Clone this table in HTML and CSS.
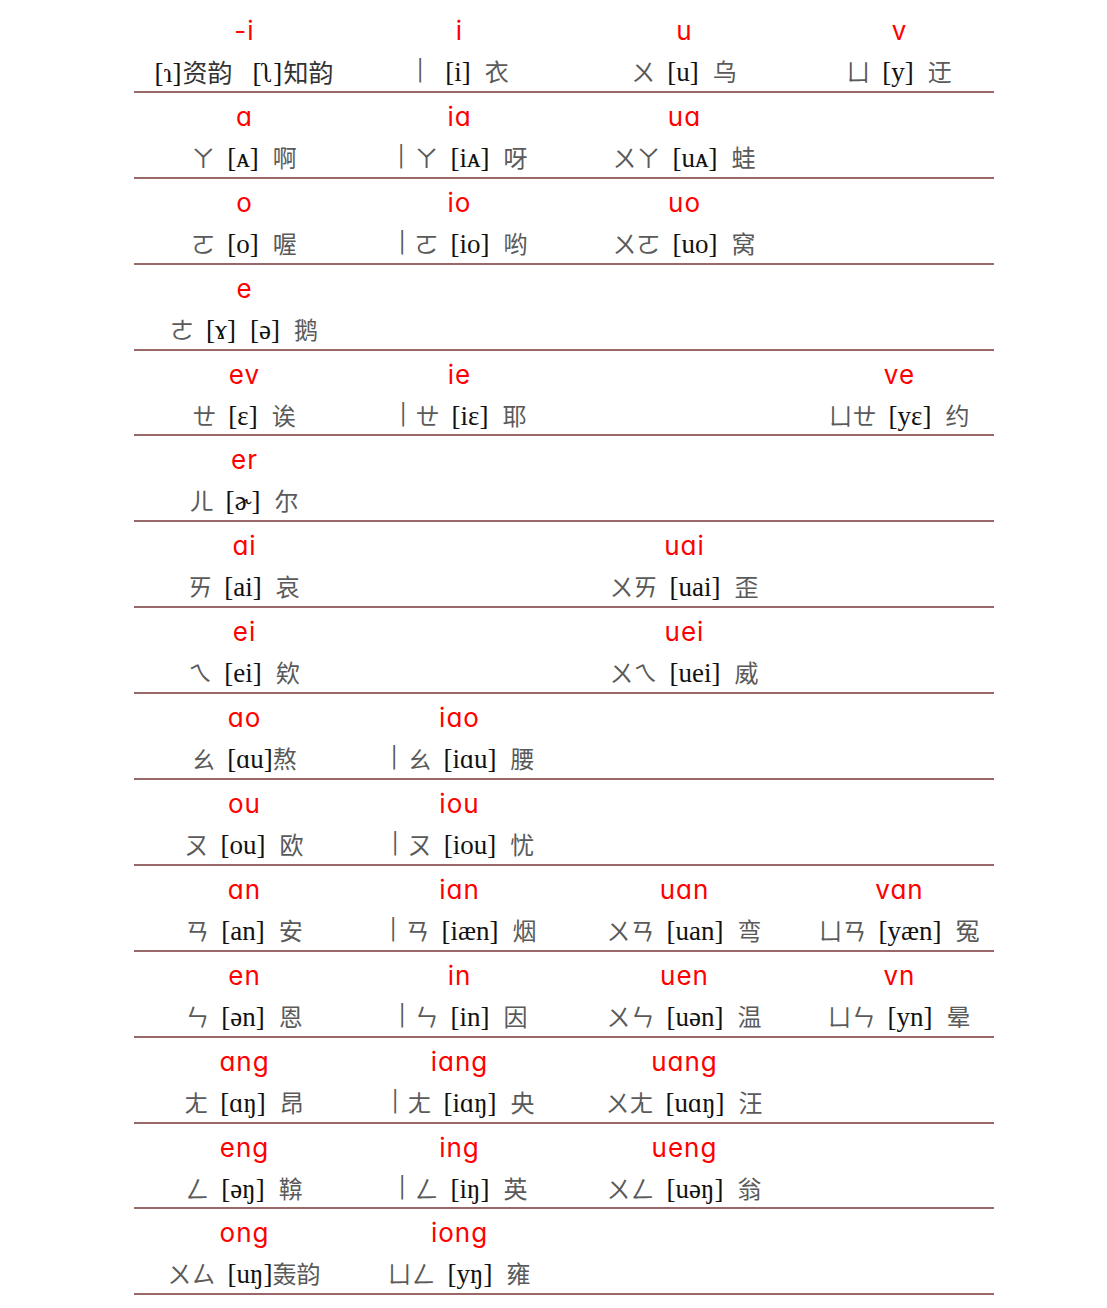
FILE: index.html
```html
<!DOCTYPE html>
<html lang="zh">
<head>
<meta charset="utf-8">
<title>韵母表</title>
<link rel="stylesheet" href="styles.css">
</head>
<body>
<div class="table">
  <div class="row">
    <div class="cell"><div class="py">-i</div><div class="zh"><span class="ipa tight">[ɿ]</span><span class="hz dark gap">资韵</span><span class="ipa tight">[ʅ]</span><span class="hz dark">知韵</span></div></div>
    <div class="cell"><div class="py">i</div><div class="zh"><span class="bp"><span class="yi">ㄧ</span></span><span class="ipa">[i]</span><span class="hz">衣</span></div></div>
    <div class="cell"><div class="py">u</div><div class="zh"><span class="bp">ㄨ</span><span class="ipa">[u]</span><span class="hz">乌</span></div></div>
    <div class="cell"><div class="py">v</div><div class="zh"><span class="bp">ㄩ</span><span class="ipa">[y]</span><span class="hz">迂</span></div></div>
  </div>
  <div class="row">
    <div class="cell"><div class="py">a</div><div class="zh"><span class="bp">ㄚ</span><span class="ipa">[ᴀ]</span><span class="hz">啊</span></div></div>
    <div class="cell"><div class="py">ia</div><div class="zh"><span class="bp"><span class="yi">ㄧ</span>ㄚ</span><span class="ipa">[iᴀ]</span><span class="hz">呀</span></div></div>
    <div class="cell"><div class="py">ua</div><div class="zh"><span class="bp">ㄨㄚ</span><span class="ipa">[uᴀ]</span><span class="hz">蛙</span></div></div>
    <div class="cell"></div>
  </div>
  <div class="row">
    <div class="cell"><div class="py">o</div><div class="zh"><span class="bp">ㄛ</span><span class="ipa">[o]</span><span class="hz">喔</span></div></div>
    <div class="cell"><div class="py">io</div><div class="zh"><span class="bp"><span class="yi">ㄧ</span>ㄛ</span><span class="ipa">[io]</span><span class="hz">哟</span></div></div>
    <div class="cell"><div class="py">uo</div><div class="zh"><span class="bp">ㄨㄛ</span><span class="ipa">[uo]</span><span class="hz">窝</span></div></div>
    <div class="cell"></div>
  </div>
  <div class="row">
    <div class="cell"><div class="py">e</div><div class="zh"><span class="bp">ㄜ</span><span class="ipa">[ɤ]</span><span class="ipa">[ə]</span><span class="hz">鹅</span></div></div>
    <div class="cell"></div>
    <div class="cell"></div>
    <div class="cell"></div>
  </div>
  <div class="row">
    <div class="cell"><div class="py">ev</div><div class="zh"><span class="bp">ㄝ</span><span class="ipa">[ɛ]</span><span class="hz">诶</span></div></div>
    <div class="cell"><div class="py">ie</div><div class="zh"><span class="bp"><span class="yi">ㄧ</span>ㄝ</span><span class="ipa">[iɛ]</span><span class="hz">耶</span></div></div>
    <div class="cell"></div>
    <div class="cell"><div class="py">ve</div><div class="zh"><span class="bp">ㄩㄝ</span><span class="ipa">[yɛ]</span><span class="hz">约</span></div></div>
  </div>
  <div class="row">
    <div class="cell"><div class="py">er</div><div class="zh"><span class="bp">ㄦ</span><span class="ipa">[ɚ]</span><span class="hz">尔</span></div></div>
    <div class="cell"></div>
    <div class="cell"></div>
    <div class="cell"></div>
  </div>
  <div class="row">
    <div class="cell"><div class="py">ai</div><div class="zh"><span class="bp">ㄞ</span><span class="ipa">[ai]</span><span class="hz">哀</span></div></div>
    <div class="cell"></div>
    <div class="cell"><div class="py">uai</div><div class="zh"><span class="bp">ㄨㄞ</span><span class="ipa">[uai]</span><span class="hz">歪</span></div></div>
    <div class="cell"></div>
  </div>
  <div class="row">
    <div class="cell"><div class="py">ei</div><div class="zh"><span class="bp">ㄟ</span><span class="ipa">[ei]</span><span class="hz">欸</span></div></div>
    <div class="cell"></div>
    <div class="cell"><div class="py">uei</div><div class="zh"><span class="bp">ㄨㄟ</span><span class="ipa">[uei]</span><span class="hz">威</span></div></div>
    <div class="cell"></div>
  </div>
  <div class="row">
    <div class="cell"><div class="py">ao</div><div class="zh"><span class="bp">ㄠ</span><span class="ipa tight">[ɑu]</span><span class="hz">熬</span></div></div>
    <div class="cell"><div class="py">iao</div><div class="zh"><span class="bp"><span class="yi">ㄧ</span>ㄠ</span><span class="ipa">[iɑu]</span><span class="hz">腰</span></div></div>
    <div class="cell"></div>
    <div class="cell"></div>
  </div>
  <div class="row">
    <div class="cell"><div class="py">ou</div><div class="zh"><span class="bp">ㄡ</span><span class="ipa">[ou]</span><span class="hz">欧</span></div></div>
    <div class="cell"><div class="py">iou</div><div class="zh"><span class="bp"><span class="yi">ㄧ</span>ㄡ</span><span class="ipa">[iou]</span><span class="hz">忧</span></div></div>
    <div class="cell"></div>
    <div class="cell"></div>
  </div>
  <div class="row">
    <div class="cell"><div class="py">an</div><div class="zh"><span class="bp">ㄢ</span><span class="ipa">[an]</span><span class="hz">安</span></div></div>
    <div class="cell"><div class="py">ian</div><div class="zh"><span class="bp"><span class="yi">ㄧ</span>ㄢ</span><span class="ipa">[iæn]</span><span class="hz">烟</span></div></div>
    <div class="cell"><div class="py">uan</div><div class="zh"><span class="bp">ㄨㄢ</span><span class="ipa">[uan]</span><span class="hz">弯</span></div></div>
    <div class="cell"><div class="py">van</div><div class="zh"><span class="bp">ㄩㄢ</span><span class="ipa">[yæn]</span><span class="hz">冤</span></div></div>
  </div>
  <div class="row">
    <div class="cell"><div class="py">en</div><div class="zh"><span class="bp">ㄣ</span><span class="ipa">[ən]</span><span class="hz">恩</span></div></div>
    <div class="cell"><div class="py">in</div><div class="zh"><span class="bp"><span class="yi">ㄧ</span>ㄣ</span><span class="ipa">[in]</span><span class="hz">因</span></div></div>
    <div class="cell"><div class="py">uen</div><div class="zh"><span class="bp">ㄨㄣ</span><span class="ipa">[uən]</span><span class="hz">温</span></div></div>
    <div class="cell"><div class="py">vn</div><div class="zh"><span class="bp">ㄩㄣ</span><span class="ipa">[yn]</span><span class="hz">晕</span></div></div>
  </div>
  <div class="row">
    <div class="cell"><div class="py">ang</div><div class="zh"><span class="bp">ㄤ</span><span class="ipa">[ɑŋ]</span><span class="hz">昂</span></div></div>
    <div class="cell"><div class="py">iang</div><div class="zh"><span class="bp"><span class="yi">ㄧ</span>ㄤ</span><span class="ipa">[iɑŋ]</span><span class="hz">央</span></div></div>
    <div class="cell"><div class="py">uang</div><div class="zh"><span class="bp">ㄨㄤ</span><span class="ipa">[uɑŋ]</span><span class="hz">汪</span></div></div>
    <div class="cell"></div>
  </div>
  <div class="row">
    <div class="cell"><div class="py">eng</div><div class="zh"><span class="bp">ㄥ</span><span class="ipa">[əŋ]</span><span class="hz">鞥</span></div></div>
    <div class="cell"><div class="py">ing</div><div class="zh"><span class="bp"><span class="yi">ㄧ</span>ㄥ</span><span class="ipa">[iŋ]</span><span class="hz">英</span></div></div>
    <div class="cell"><div class="py">ueng</div><div class="zh"><span class="bp">ㄨㄥ</span><span class="ipa">[uəŋ]</span><span class="hz">翁</span></div></div>
    <div class="cell"></div>
  </div>
  <div class="row">
    <div class="cell"><div class="py">ong</div><div class="zh"><span class="bp">ㄨㄙ</span><span class="ipa tight">[uŋ]</span><span class="hz">轰韵</span></div></div>
    <div class="cell"><div class="py">iong</div><div class="zh"><span class="bp">ㄩㄥ</span><span class="ipa">[yŋ]</span><span class="hz">雍</span></div></div>
    <div class="cell"></div>
    <div class="cell"></div>
  </div>
</div>
</body>
</html>
```

FILE: styles.css
```css
html, body {
  margin: 0;
  padding: 0;
  background: #ffffff;
}

.table {
  width: 860px;
  margin-left: 134px;
  padding-top: 7px;
}

.row {
  display: grid;
  grid-template-columns: 220px 210px 240px 190px;
  height: 83.9px;
  border-bottom: 2px solid #9a6868;
}

.cell {
  display: flex;
  flex-direction: column;
  align-items: center;
  padding-top: 4px;
}

.py {
  height: 40px;
  line-height: 40px;
  font-family: Inter, "Noto Sans", sans-serif;
  font-feature-settings: "cv11" 1;
  font-size: 26px;
  letter-spacing: 1px;
  padding-left: 1px;
  color: #ff0000;
}

.zh {
  display: flex;
  align-items: baseline;
  justify-content: center;
  height: 40px;
  padding-top: 2px;
  white-space: nowrap;
}

.bp {
  font-family: "Noto Sans CJK TC", "Noto Sans CJK SC", sans-serif;
  font-size: 24px;
  font-weight: 400;
  color: #5a5a5a;
  margin-right: 12px;
}

.yi {
  display: inline-block;
  transform: rotate(90deg) scale(1.35, 0.85);
}

.ipa {
  font-family: "Liberation Serif", "DejaVu Serif", serif;
  font-size: 27px;
  color: #111111;
  margin-right: 14px;
}

.ipa.tight {
  margin-right: 0;
}

.hz {
  font-family: "Noto Sans CJK SC", sans-serif;
  font-size: 24px;
  font-weight: 400;
  color: #5a5a5a;
}

.hz.dark {
  font-size: 25px;
  color: #333333;
  margin-left: 1px;
}

.hz.gap {
  margin-right: 20px;
}
```
